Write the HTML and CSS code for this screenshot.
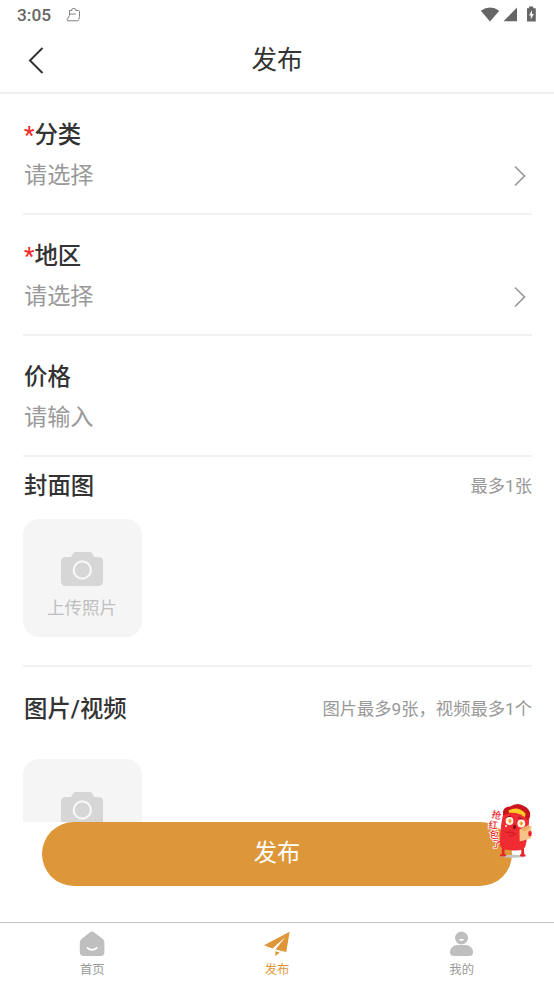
FILE: index.html
```
<!DOCTYPE html>
<html lang="zh-CN">
<head>
<meta charset="utf-8">
<title>发布</title>
<link rel="stylesheet" href="styles.css">
</head>
<body>
<svg class="defs" width="0" height="0">
  <symbol id="camera" viewBox="0 0 42 34">
    <path fill="#d6d6d6" d="M5 5h4q1.400 0 2-1.500L12.200 1.300Q12.800 0 14 0h15q1.300 0 2 1.300l1.300 2.200Q33 5 34.500 5H37.500Q42 5.500 42 9v20q0 5-5 5H5q-5 0-5-5V10q0-5 5-5z"/>
    <circle cx="21.300" cy="18" r="8.600" fill="none" stroke="#f7f7f7" stroke-width="2.200"/>
  </symbol>
</svg>
<div class="status">
  <span class="time">3:05</span>
  <svg class="note" width="16" height="16" viewBox="0 0 16 16" fill="none" stroke="#808080" stroke-width="1"><path d="M3.500 3.500h2.300V2.200q2-1.600 4 0v1.300h2.700q1 0 1 1v4.800l-.7 3.200q-.3 1.300-1.500 1.300H2q-1.200 0-.8-1.200L3.500 8.500zM3.500 7h6.300"/></svg>
  <svg class="signals" width="58" height="18" viewBox="0 0 58 18"><path fill="#666" d="M.8 4.700Q10-1.800 19.300 4.700L10 15.500zM37 1.500v13.800H23.500z"/><path fill="#666" d="M49 .5h4.200v1.700h2.600V15.500H47V2.200h2z"/><path fill="#fff" d="M52 4.300l-3 5.300h1.800v4l3-5.500H52z"/></svg>
</div>
<header class="nav">
  <svg class="back" width="18" height="28" viewBox="0 0 18 28" fill="none" stroke="#333" stroke-width="2"><path d="M15.500 2L3 14.500l12.500 12.500"/></svg>
  <h1>发布</h1>
</header>
<main class="form">
  <section class="field">
    <div class="label"><i>*</i>分类</div>
    <div class="value">请选择<svg width="14" height="22" viewBox="0 0 14 22"><path d="M2 1.500L11.500 11 2 20.500"/></svg></div>
  </section>
  <section class="field">
    <div class="label"><i>*</i>地区</div>
    <div class="value">请选择<svg width="14" height="22" viewBox="0 0 14 22"><path d="M2 1.500L11.500 11 2 20.500"/></svg></div>
  </section>
  <section class="field">
    <div class="label">价格</div>
    <div class="value">请输入</div>
  </section>
  <section class="media cover">
    <div class="head"><span class="label">封面图</span><span class="hint">最多1张</span></div>
    <div class="upload"><svg width="42" height="34"><use href="#camera"/></svg><span>上传照片</span></div>
  </section>
  <section class="media gallery">
    <div class="head"><span class="label">图片/视频</span><span class="hint">图片最多9张，视频最多1个</span></div>
    <div class="upload"><svg width="42" height="34"><use href="#camera"/></svg></div>
  </section>
</main>
<div class="actions">
  <button class="submit">发布</button>
  <svg class="mascot" width="54" height="64" viewBox="0 0 54 64">
    <ellipse cx="29" cy="58.300" rx="13" ry="1.500" fill="#c5c1bc"/>
    <g class="slogan"><text x="7.500" y="20.500" transform="rotate(14 12 18)">抢</text><text x="4.500" y="30.500" transform="rotate(4 9 27)">红</text><text x="5.500" y="40" transform="rotate(8 9 37)">包</text><text x="8" y="49.500" transform="rotate(8 11 46)">了</text></g>
    <path d="M20 48Q18.500 52 19.500 57M37 47Q39.500 51 38.500 57" fill="none" stroke="#e82328" stroke-width="2.800"/>
    <path d="M17 57.300h4M37 57.300h3.500" stroke="#e82328" stroke-width="2.200" stroke-linecap="round"/>
    <path fill="#f02b32" d="M20 13L45.500 17Q44.500 35 41.500 48Q40 53 29 52.500Q17 52 16 47.500Q15.500 30 20 13z"/>
    <path fill="#c9151d" d="M19 15Q18.500 9 26 8.500Q33 4 39 7.500Q47.500 11 46 19L43.500 22Q32 12 19 18z"/>
    <path fill="#ffc928" d="M24.500 12.500Q34 7.500 41.500 15.500L41 20Q34 14 25 14.800z"/>
    <path fill="#f02b32" d="M19 17.500Q31 11.500 42.500 20.500L42 30H18z"/>
    <path d="M22.500 19.500l4.500-1.500M34.500 19.500l4.500 2" stroke="#751014" stroke-width="1"/>
    <circle cx="25.500" cy="23" r="3.900" fill="#fff6e8"/><circle cx="37.300" cy="25.500" r="3.900" fill="#fff6e8"/>
    <path fill="#f4a029" d="M26 20.500l1.900 2.500-1.900 2.500-1.900-2.500zM37.300 23l1.900 2.500-1.900 2.500-1.900-2.500z"/>
    <circle cx="22" cy="28" r=".9" fill="#fff"/><ellipse cx="30.500" cy="29" rx="1.700" ry="2.200" fill="#8c1018"/>
    <path d="M22 34.500Q27 33.500 31.500 36Q30 38.500 25 37.500" stroke="#d51c24" stroke-width="1.300" fill="none"/>
    <path fill="#f5c486" d="M35.500 31.500l8.500-4 3.500 1-.8 12-11 3z"/><path fill="#eaae69" d="M35.500 31.500l6 2 5-5-2.500-1z"/><ellipse cx="46" cy="35.500" rx="1.800" ry="2.700" fill="#e82328"/>
  </svg>
</div>
<nav class="tabs">
  <a><svg width="26" height="26" viewBox="0 0 26 26"><path fill="#bfbfbf" d="M11 1.200q2-1.500 4 0l8.500 6.500q1.900 1.500 1.900 4V21q0 4-4 4H4.800q-4 0-4-4v-9.300q0-2.500 2-4z"/><path d="M8.500 17q4.500 3.800 9.300 0" fill="none" stroke="#fff" stroke-width="1.800" stroke-linecap="round"/></svg><span>首页</span></a>
  <a class="on"><svg width="26" height="26" viewBox="0 0 26 26"><path fill="#de9638" d="M25.600.8L0 14.200l8.500 3.300L21.500 6 11.500 18.500l10.800 2.500zM11.300 20.300V25l4.500-3.600z"/></svg><span>发布</span></a>
  <a><svg width="26" height="26" viewBox="0 0 26 26"><circle cx="12.500" cy="7" r="6.500" fill="#bfbfbf"/><path fill="#bfbfbf" d="M8 14h9q7 1 7 7.500Q24 25 20 25H5q-4 0-4-3.500Q1 15 8 14z"/><path d="M10 8h5q-.5 2-2.500 2T10 8z" fill="#fff"/></svg><span>我的</span></a>
</nav>
</body>
</html>
```
FILE: styles.css
```
* { box-sizing: border-box; }
body {
  margin: 0;
  width: 554px;
  height: 984px;
  overflow: hidden;
  display: flex;
  flex-direction: column;
  background: #fff;
  color: #333;
  font-family: Roboto, "Noto Sans CJK SC", sans-serif;
}
svg { display: block; flex: none; }
.defs { position: absolute; }
.status {
  height: 30px;
  flex: none;
  display: flex;
  align-items: center;
  padding: 0 16px 0 17px;
  color: #666;
}
.time { font-size: 17.300px; font-weight: 500; line-height: 30px; }
.note { margin-left: 15px; }
.signals { margin-left: auto; }
.nav {
  height: 64px;
  flex: none;
  display: grid;
  grid-template-columns: 28px 1fr 28px;
  padding: 0 27px;
  border-bottom: 2px solid #efefef;
}
.back { margin-top: 16px; }
.nav h1 {
  margin: 0;
  font-size: 25.600px;
  font-weight: 400;
  line-height: 60px;
  text-align: center;
}
.form { height: 728px; flex: none; overflow: hidden; padding: 0 22px 0 23px; }
.field { height: 121px; padding-top: 21px; border-bottom: 2px solid #f1f1f1; }
.field .label, .value, .head { padding-left: 1px; }
.label { font-size: 23.400px; font-weight: 500; line-height: 40px; }
.field .label { height: 40px; }
.label i { color: #f32b2b; font-style: normal; font-weight: 500; line-height: 1; }
.value {
  display: flex;
  align-items: center;
  justify-content: space-between;
  height: 40px;
  font-size: 23.200px;
  line-height: 40px;
  color: #999;
}
.value svg { margin: 2px 5px 0 0; fill: none; stroke: #999; stroke-width: 1.700; }
.media { border-bottom: 2px solid #f1f1f1; }
.cover { height: 210px; padding-top: 9px; }
.gallery { height: 260px; padding-top: 22px; }
.head { display: flex; justify-content: space-between; align-items: center; height: 40px; }
.hint { font-size: 17.300px; color: #999; line-height: 40px; }
.upload {
  width: 119px;
  height: 118px;
  margin-top: 13px;
  padding: 33px 1px 0 0;
  border-radius: 16px;
  background: #f5f5f5;
  display: flex;
  flex-direction: column;
  align-items: center;
  color: #bfbfbf;
  font-size: 17.500px;
  line-height: 26px;
}
.upload span { margin-top: 9px; }
.gallery .upload { margin-top: 30px; }
.actions { position: relative; height: 100px; flex: none; padding: 0 42px; }
.submit {
  display: block;
  width: 470px;
  height: 64px;
  padding: 0 0 2px;
  border: 0;
  border-radius: 32px;
  background: #dd9638;
  color: #fff;
  font: 400 23.300px/62px Roboto, "Noto Sans CJK SC", sans-serif;
}
.mascot { position: absolute; left: 484px; top: -24px; }
.slogan { font: 500 9.500px "Noto Sans CJK SC", sans-serif; fill: #ef2930; stroke: #fff; stroke-width: 1.500px; paint-order: stroke; }
.tabs {
  height: 62px;
  flex: none;
  display: grid;
  grid-template-columns: repeat(3, 1fr);
  border-top: 1px solid #c8c8c8;
  color: #999;
  font-size: 12.300px;
}
.tabs a { display: flex; flex-direction: column; align-items: center; padding-top: 8px; }
.tabs span { line-height: 18px; margin-top: 4px; }
.tabs .on { color: #de9638; }
```
